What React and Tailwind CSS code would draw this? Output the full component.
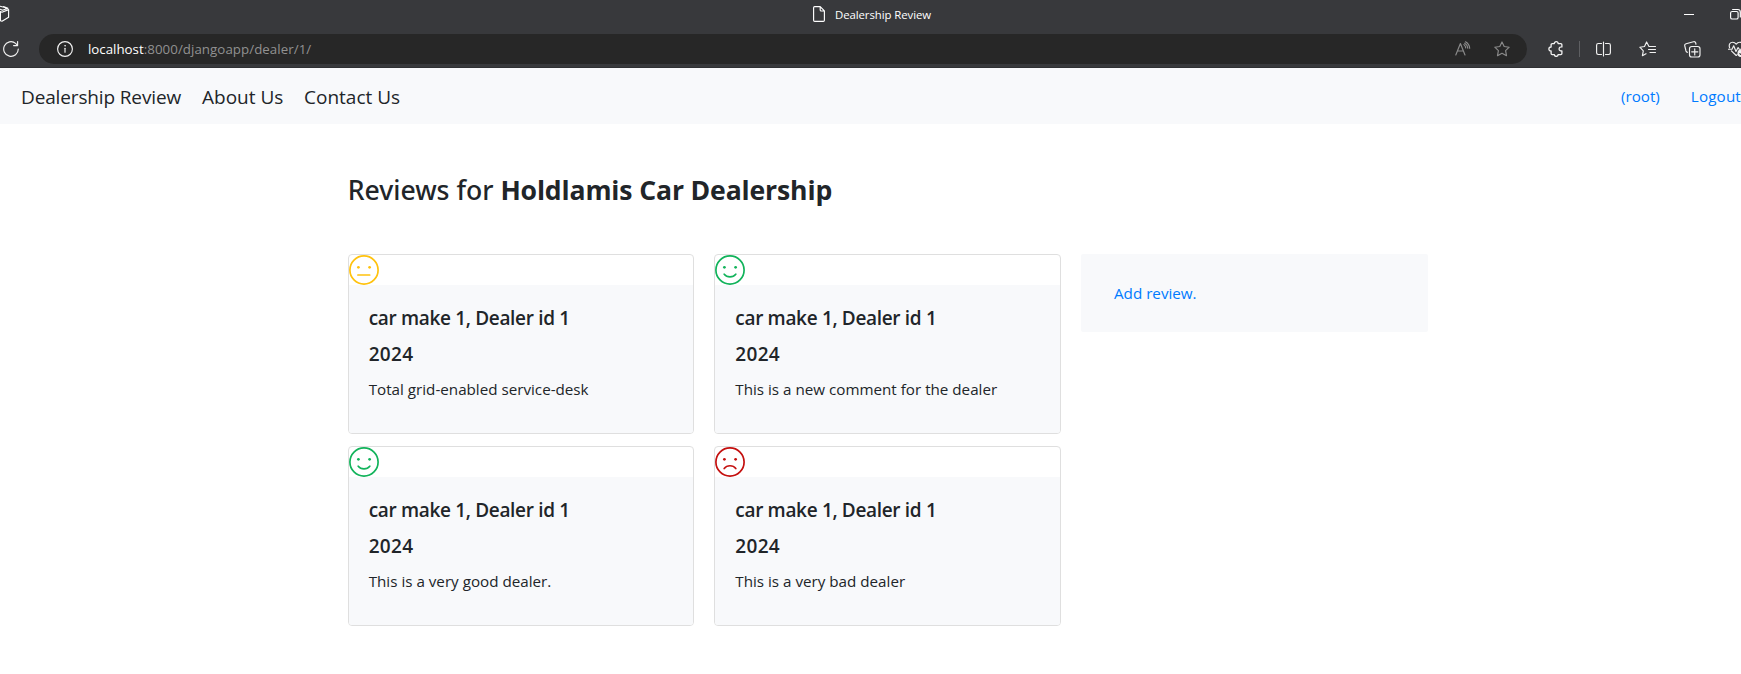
import React from "react";

const stroke = {
  fill: "none",
  stroke: "currentColor",
  strokeWidth: 1.15,
  strokeLinecap: "round",
  strokeLinejoin: "round",
};

const STAR = "M8 .9 10.2 5.5l5 .7-3.6 3.5.9 5L8 12.3l-4.5 2.4.9-5L.8 6.2l5-.7Z";

function TitleBar() {
  return (
    <div className="flex h-[30px] items-center pb-[2px] text-white">
      <svg className="h-[18px] w-[10px] shrink-0" viewBox="8 0 10 18" {...stroke}>
        <path d="M10 7.200 16.600 4.600V12.200L10 16.200 8.400 15.700V6.600L10 7.200M13.800 3.900V2.800L8 1.200M10.500 5.200 16 3.200 11.500 1.600M8 4.200l2.500 1" />
      </svg>
      <svg className="ml-[803px] h-4 w-3 shrink-0" viewBox="0 0 12 16" {...stroke}>
        <path d="M1.600.6h5.600l4.200 4.300v9.300c0 .7-.4 1.200-1.100 1.200H1.700C1 15.400.6 14.900.6 14.200V1.800C.6 1.100 1 .6 1.600.6ZM7.200.8v3.100c0 .7.4 1.100 1.100 1.100h3" />
      </svg>
      <span className="ml-[10px] pt-px text-[11.4px] leading-4 tracking-[-0.08px] whitespace-nowrap">
        Dealership Review
      </span>
      <svg className="ml-auto h-4 w-[10px] shrink-0" viewBox="0 0 10 16">
        <path d="M0 8h10v1H0Z" fill="currentColor" />
      </svg>
      <svg className="ml-[36px] h-4 w-[11px] shrink-0" viewBox="0 0 11 16" {...stroke}>
        <rect x=".6" y="5.500" width="7.500" height="7.500" rx="1.600" />
        <path d="M2.600 3.500h5.200c1.600 0 2.500 1 2.500 2.500v5" />
      </svg>
    </div>
  );
}

function AddressBar() {
  return (
    <div className="flex h-[38px] items-center overflow-hidden pl-[3px] text-[#f1f1f1]">
      <svg className="size-4 shrink-0" viewBox="0 0 16 16" {...stroke}>
        <path d="M15.300 8A7.300 7.300 0 1 1 12.600 2.350L14.500 4.300M14.600.6v4h-4" />
      </svg>
      <div className="ml-5 flex h-[30px] w-[1488px] shrink-0 items-center rounded-full bg-[#272727] pr-[17px] pl-[18px]">
        <svg className="size-4" viewBox="0 0 16 16" {...stroke}>
          <circle cx="8" cy="8" r="7.400" />
          <path d="M8 7.200v4" />
          <circle cx="8" cy="4.800" r=".45" fill="currentColor" strokeWidth=".6" />
        </svg>
        <span className="ml-[15px] text-[13.3px] leading-5 whitespace-nowrap text-white">
          localhost<span className="tracking-[0.055px] text-[#919191]">:8000/djangoapp/dealer/1/</span>
        </span>
        <svg className="ml-auto size-4 text-[#8b8b8b]" viewBox="0 0 16 16" {...stroke}>
          <path d="M.8 14 5.400 2.500 10 14M2.400 10h6M8.900 3.600c1.100.9 1.700 2 1.800 3.300M10.500.8c2.500 1.400 4 3.600 4.200 6.500M9.700 2.200c1.900 1.100 2.900 2.700 3.100 4.900" />
        </svg>
        <svg className="ml-[23px] size-4 text-[#8b8b8b]" viewBox="0 0 16 16" {...stroke}>
          <path d={STAR} />
        </svg>
      </div>
      <svg className="ml-[21px] size-4 shrink-0" viewBox="0 0 16 16" {...stroke} strokeWidth="1.300">
        <path d="M4.200 2.600H6.300C6.300 1.300 7.100.7 8.200.7s1.900.6 1.900 1.900h2.700c.7 0 1.100.4 1.100 1.100v2.200c-1.600-.2-2.800.6-2.800 2s1.200 2.300 2.800 2v2.600c0 .7-.4 1.100-1.100 1.100h-2.700c0 1.200-.8 1.800-1.900 1.800s-1.900-.6-1.900-1.800H4.200c-.7 0-1.100-.4-1.100-1.100V10C1.600 10 .9 9.200.9 8s.7-2 2.200-2V3.700c0-.7.4-1.100 1.100-1.100Z" />
      </svg>
      <div className="ml-[15px] h-4 w-px shrink-0 bg-[#5e5f62]" />
      <svg className="ml-4 size-4 shrink-0" viewBox="0 0 16 16" {...stroke}>
        <path d="M5.500 2.500H2.300C1.300 2.500.6 3.200.6 4.200v7.600c0 1 .7 1.700 1.700 1.700h3.200M9.500 2.500h3.200c1 0 1.700.7 1.700 1.700v7.600c0 1-.7 1.700-1.700 1.700H9.500M7.500 1v14" />
      </svg>
      <svg className="ml-[27px] h-4 w-[18px] shrink-0" viewBox="0 0 18 16" {...stroke}>
        <path d="M10.500 5.500 10 5.400 7.600.9 5.500 5.500.8 6.200l3.500 3.600-.9 4.900L7 12.700M11 5.500h5.500M9.500 8.500h7M11 11.500h5.500" />
      </svg>
      <svg className="ml-[27px] h-[17px] w-[17px] shrink-0" viewBox="0 0 17 17" {...stroke}>
        <path d="M3.500 11.300C2.600 11.200 2.200 10.700 2 10L.8 5C.5 3.900 1 3 2.100 2.700L9.500.8c1.100-.3 1.900.2 2.200 1.200l.3 1.300" />
        <rect x="5.500" y="5.500" width="10.500" height="10.500" rx="2.300" />
        <path d="M10.750 7.700v6.200M7.650 10.800h6.200" />
      </svg>
      <svg className="ml-[27px] h-4 w-[18px] shrink-0" viewBox="0 0 18 16" {...stroke}>
        <path d="M1.600 6.700C.5 3.700 2 1.200 4.700 1.200c1.600 0 2.600.8 3.500 2 .9-1.200 1.900-2 3.500-2 2.700 0 4.300 2.500 3.200 5.500M3.400 9.800l4.800 4.700 1-.9M0 8.200h4l1.700-3.400 2.300 5.700 2.100-4 1.100 1.700h3.500" />
        <circle cx="13.200" cy="12.200" r="3.200" fill="currentColor" />
        <path d="m11.800 12.600 1 .9 2-2.200" stroke="#38393c" />
      </svg>
    </div>
  );
}

const FACES = {
  neutral: { color: "text-[#ffc20e]", mouth: "M8.900 20h11.800" },
  positive: { color: "text-[#12b35b]", mouth: "M9.200 19.200c2.800 3.500 8.800 3.500 11.600 0" },
  negative: { color: "text-[#c4100f]", mouth: "M9.200 21.500c2.800-3.700 8.800-3.700 11.600 0" },
};

function Face({ mood }) {
  const face = FACES[mood];
  return (
    <svg
      className={`size-[30px] ${face.color}`}
      viewBox="0 0 30 30"
      fill="none"
      stroke="currentColor"
      strokeWidth="1.700"
      strokeLinecap="round"
    >
      <circle cx="15" cy="15" r="14.100" />
      <circle cx="9.400" cy="12.300" r="1.350" fill="currentColor" stroke="none" />
      <circle cx="20.600" cy="12.300" r="1.350" fill="currentColor" stroke="none" />
      <path d={face.mouth} />
    </svg>
  );
}

const REVIEWS = [
  { mood: "neutral", text: "Total grid-enabled service-desk" },
  { mood: "positive", text: "This is a new comment for the dealer" },
  { mood: "positive", text: "This is a very good dealer." },
  { mood: "negative", text: "This is a very bad dealer" },
];

function ReviewCard({ mood, text }) {
  return (
    <div className="flex h-[180px] flex-col overflow-hidden rounded-[4px] border border-[#dfdfdf] bg-white">
      <Face mood={mood} />
      <div className="flex-1 bg-[#f8f9fb] px-5 pt-[21px]">
        <h5 className="mb-3 text-[19px] leading-6 font-semibold tracking-[-0.33px]">car make 1, Dealer id 1</h5>
        <h5 className="mb-[11px] text-[19px] leading-6 font-semibold tracking-[0.3px]">2024</h5>
        <p className="text-[15.2px] leading-6">{text}</p>
      </div>
    </div>
  );
}

export default function App() {
  return (
    <div className="h-[674px] w-[1741px] overflow-hidden bg-white font-['Open_Sans',sans-serif] text-[#212529]">
      <header className="h-[68px] border-b border-[#2f3033] bg-[#38393c]">
        <TitleBar />
        <AddressBar />
      </header>
      <nav className="flex h-14 items-center overflow-hidden bg-[#f8f9fb] pl-[21px] text-[19px] whitespace-nowrap">
        <a className="w-[181px] pt-[3px] tracking-[-0.14px]">Dealership Review</a>
        <a className="w-[102px] pt-[3px]">About Us</a>
        <a className="pt-[3px]">Contact Us</a>
        <div className="ml-auto flex w-[120px] gap-[31px] text-[15.2px] text-[#007bff]">
          <a>(root)</a>
          <a className="tracking-[0.15px]">Logout</a>
        </div>
      </nav>
      <main className="ml-[347.7px] w-[1080px] pt-[49px]">
        <h3 className="text-[26.6px] leading-[34px] whitespace-nowrap">
          <span className="font-['Noto_Sans',sans-serif] font-medium">Reviews for </span>
          <b className="font-bold tracking-[-0.15px]">Holdlamis Car Dealership</b>
        </h3>
        <div className="mt-[47px] grid grid-cols-3 items-start gap-x-5">
          <div className="col-span-2 grid grid-cols-2 gap-x-5 gap-y-3">
            {REVIEWS.map((r) => (
              <ReviewCard key={r.text} {...r} />
            ))}
          </div>
          <div className="flex h-[78px] items-center rounded-[2px] bg-[#f8f9fb] pl-[33px] text-[15.2px] text-[#007bff]">
            <a>Add review.</a>
          </div>
        </div>
      </main>
    </div>
  );
}
